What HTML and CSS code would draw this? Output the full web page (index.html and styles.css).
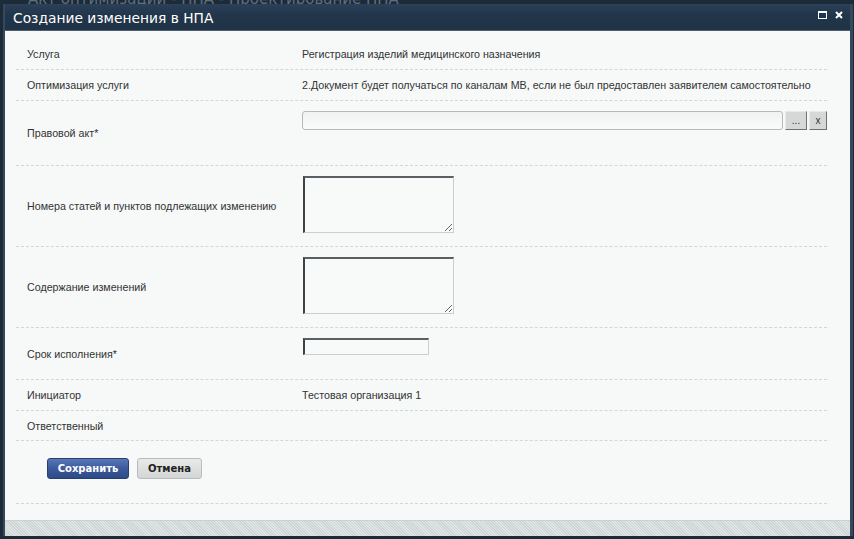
FILE: index.html
```html
<!DOCTYPE html>
<html lang="ru">
<head>
    <meta charset="UTF-8">
    <meta name="viewport" content="width=device-width, initial-scale=1.0">
    <title>Создание изменения в НПА</title>
    <link rel="stylesheet" href="styles.css">
</head>
<body>
    <div class="page-header">
        <span>Акт оптимизации - НПА - Проектирование НПА</span>
    </div>

    <div class="dialog">
        <div class="dialog-title">
            <span class="title-text">Создание изменения в НПА</span>
            <div class="title-icons">
                <svg width="9" height="8" viewBox="0 0 9 8">
                    <rect x="0.5" y="0.5" width="8" height="7" fill="none" stroke="#fff" stroke-width="1"/>
                    <rect x="0" y="0" width="9" height="2" fill="#fff"/>
                </svg>
                <svg width="8" height="8" viewBox="0 0 8 8">
                    <path d="M1 1 L7 7 M7 1 L1 7" stroke="#fff" stroke-width="2"/>
                </svg>
            </div>
        </div>

        <div class="dialog-body">
            <div class="form">
                <div class="row row-short">
                    <div class="label">Услуга</div>
                    <div class="value">Регистрация изделий медицинского назначения</div>
                </div>
                <div class="row row-short">
                    <div class="label">Оптимизация услуги</div>
                    <div class="value">2.Документ будет получаться по каналам МВ, если не был предоставлен заявителем самостоятельно</div>
                </div>
                <div class="row row-lookup">
                    <div class="label">Правовой акт*</div>
                    <div class="value top">
                        <div class="lookup">
                            <div class="lookup-input"></div>
                            <div class="lookup-btn">...</div>
                            <div class="lookup-btn">x</div>
                        </div>
                    </div>
                </div>
                <div class="row row-area">
                    <div class="label">Номера статей и пунктов подлежащих изменению</div>
                    <div class="value top"><textarea class="area"></textarea></div>
                </div>
                <div class="row row-area">
                    <div class="label">Содержание изменений</div>
                    <div class="value top"><textarea class="area"></textarea></div>
                </div>
                <div class="row row-date">
                    <div class="label">Срок исполнения*</div>
                    <div class="value top"><input type="text" class="date"></div>
                </div>
                <div class="row row-short">
                    <div class="label">Инициатор</div>
                    <div class="value">Тестовая организация 1</div>
                </div>
                <div class="row row-last">
                    <div class="label">Ответственный</div>
                    <div class="value"></div>
                </div>
                <div class="row row-buttons">
                    <div class="buttons">
                        <div class="btn btn-save">Сохранить</div>
                        <div class="btn btn-cancel">Отмена</div>
                    </div>
                </div>
            </div>
        </div>
        <div class="dialog-footer"></div>
    </div>
</body>
</html>
```

FILE: styles.css
```css
body {
    margin: 0;
    width: 854px;
    height: 539px;
    overflow: hidden;
    background-color: #1d2b39;
    font-family: "Liberation Sans", Arial, sans-serif;
    font-size: 10.7px;
    color: #333;
    position: relative;
}
.page-header {
    height: 4px;
    overflow: hidden;
    display: flex;
    align-items: flex-end;
    padding-left: 28px;
}
.page-header span {
    font-family: "DejaVu Sans", Verdana, sans-serif;
    font-size: 15px;
    line-height: 15px;
    color: #5f6f7e;
    white-space: nowrap;
    margin-bottom: -3px;
}
.dialog {
    position: absolute;
    top: 4px;
    left: 3px;
    width: 845px;
    height: 532px;
    border-left: 2px solid #34495e;
    border-right: 3px solid #34495e;
    display: flex;
    flex-direction: column;
}
.dialog-title {
    height: 27px;
    box-sizing: border-box;
    background: linear-gradient(#2b4159, #22364b 40%, #1f3246);
    border-bottom: 1px solid #4d5f70;
    display: flex;
    align-items: center;
    justify-content: space-between;
    padding: 2px 7px 0 8px;
}
.title-text {
    font-family: "DejaVu Sans", Verdana, sans-serif;
    font-size: 13.8px;
    color: #fff;
}
.title-icons {
    display: flex;
    gap: 8px;
    align-items: center;
    margin-bottom: 6px;
}
.title-icons svg {
    display: block;
}
.dialog-body {
    flex: 1;
    background-color: #f7f9f9;
    padding: 8px 0 0 11px;
}
.dialog-footer {
    height: 15px;
    background-color: #d6dddd;
    background-image: repeating-linear-gradient(45deg, #cdd5d5 0 1px, #dfe5e5 1px 2px);
    border-top: 1px solid #c9d1d1;
}
.form {
    width: 811px;
}
.row {
    display: flex;
    border-bottom: 1px dashed #cfd8d8;
}
.label {
    width: 275px;
    padding-left: 11px;
    display: flex;
    align-items: center;
}
.value {
    flex: 1;
    display: flex;
    align-items: center;
}
.value.top {
    align-items: flex-start;
    padding-top: 10px;
}
.row-short {
    height: 30px;
}
.row-lookup {
    height: 64px;
}
.row-area {
    height: 80px;
}
.row-date {
    height: 51px;
}
.row-last {
    height: 29px;
}
.row-buttons {
    height: 62px;
}
.lookup {
    flex: 1;
    display: flex;
    gap: 2px;
    height: 19px;
}
.lookup-input {
    flex: 1;
    border: 1px solid #b4b9bc;
    border-radius: 3px;
    background: linear-gradient(#f0f1f1, #fbfbfb);
}
.lookup-btn {
    width: 22px;
    box-sizing: border-box;
    background-color: #d6d8d8;
    border: 1px solid #e8e8e8;
    border-right-color: #6d7275;
    border-bottom-color: #6d7275;
    display: flex;
    justify-content: center;
    align-items: center;
    font-size: 10px;
    color: #333;
}
.lookup-btn:last-child {
    width: 18px;
}
.area {
    display: block;
    width: 151px;
    height: 57px;
    margin: 0 0 0 1px;
    box-sizing: border-box;
    border: 1px solid #c9cfd0;
    border-top: 2px solid #5a5f63;
    border-left: 2px solid #3d4246;
    background-color: #f8fafa;
    resize: both;
}
.date {
    display: block;
    width: 126px;
    height: 17px;
    margin: 0 0 0 1px;
    box-sizing: border-box;
    border: 1px solid #c9cfd0;
    border-top: 2px solid #5a5f63;
    border-left: 2px solid #3d4246;
    background-color: #f8fafa;
    padding: 0;
}
.buttons {
    display: flex;
    gap: 8px;
    padding: 17px 0 0 31px;
}
.btn {
    height: 21px;
    box-sizing: border-box;
    border-radius: 3px;
    display: flex;
    align-items: center;
    justify-content: center;
    font-family: "DejaVu Sans", Verdana, sans-serif;
    font-size: 10px;
    font-weight: bold;
}
.btn-save {
    width: 82px;
    color: #fff;
    background: linear-gradient(#5677b8, #3c5a9c 50%, #2d4a88);
    border: 1px solid #283f70;
}
.btn-cancel {
    width: 65px;
    color: #222;
    background: linear-gradient(#e8e9e9, #d4d6d6);
    border: 1px solid #b9bcbd;
}
```
